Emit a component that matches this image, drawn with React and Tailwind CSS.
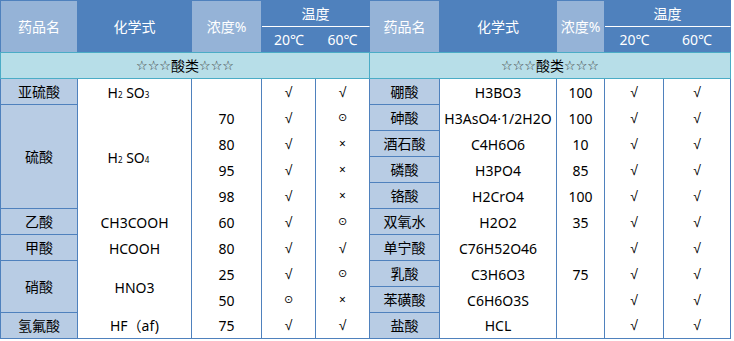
import React from "react";

// colours taken from the reference table
const line = "border-[#4f81bd]";

function Head({ children, light, className = "" }) {
  return (
    <div
      className={`flex items-center justify-center border-t border-r ${line} text-white ${
        light ? "bg-[#95b3d7]" : "bg-[#4f81bd]"
      } ${className}`}
    >
      {children}
    </div>
  );
}

function Name({ children, first, className = "" }) {
  return (
    <div
      className={`flex items-center justify-center bg-[#b8cce4] border-r border-b ${line} ${
        first ? "border-l" : ""
      } ${className}`}
    >
      {children}
    </div>
  );
}

function Cell({ children, last, className = "" }) {
  return (
    <div
      className={`flex items-center justify-center bg-white border-r ${line} ${
        last ? "border-b" : ""
      } ${className}`}
    >
      {children}
    </div>
  );
}

// marks used in the temperature columns
const Ok = () => <span className="font-['Liberation_Sans',sans-serif] text-[14px]">√</span>;
const Mid = () => <span className="font-['DejaVu_Sans',sans-serif] text-[11px]">⊙</span>;
const No = () => <span className="text-[12px]">×</span>;

function Sub({ children }) {
  return <span className="inline-block text-[8px] leading-none translate-y-[3px]">{children}</span>;
}

function Category({ first }) {
  return (
    <div
      className={`col-span-5 flex items-center justify-center bg-[#b7dee8] border-t border-b border-r border-[#4bacc6] ${
        first ? "border-l" : ""
      }`}
    >
      <span className="text-[13px] text-[#333] font-['DejaVu_Sans',sans-serif]">☆☆☆</span>
      酸类
      <span className="text-[13px] text-[#333] font-['DejaVu_Sans',sans-serif]">☆☆☆</span>
    </div>
  );
}

function LeftTable() {
  return (
    <div className="grid grid-cols-[78px_114px_70px_54px_54px] grid-rows-[27px_25px_27px_repeat(10,26px)]">
      <Head light className="row-span-2 border-l">药品名</Head>
      <Head className="row-span-2">化学式</Head>
      <Head light className="row-span-2">浓度%</Head>
      <Head className="col-span-2 border-b border-b-white">温度</Head>
      <div className="flex items-center justify-center bg-[#4f81bd] text-white">20℃</div>
      <div className="flex items-center justify-center bg-[#4f81bd] text-white border-r border-[#4f81bd]">60℃</div>

      <Category first />

      <Name first>亚硫酸</Name>
      <Cell className="pr-3">
        H<Sub>2</Sub>&nbsp;SO<Sub>3</Sub>
      </Cell>
      <Cell></Cell>
      <Cell><Ok /></Cell>
      <Cell><Ok /></Cell>

      <Name first className="row-span-4">硫酸</Name>
      <Cell className="row-span-4 pr-3">
        H<Sub>2</Sub>&nbsp;SO<Sub>4</Sub>
      </Cell>
      <Cell>70</Cell>
      <Cell><Ok /></Cell>
      <Cell><Mid /></Cell>
      <Cell>80</Cell>
      <Cell><Ok /></Cell>
      <Cell><No /></Cell>
      <Cell>95</Cell>
      <Cell><Ok /></Cell>
      <Cell><No /></Cell>
      <Cell>98</Cell>
      <Cell><Ok /></Cell>
      <Cell><No /></Cell>

      <Name first>乙酸</Name>
      <Cell>CH3COOH</Cell>
      <Cell>60</Cell>
      <Cell><Ok /></Cell>
      <Cell><Mid /></Cell>

      <Name first>甲酸</Name>
      <Cell>HCOOH</Cell>
      <Cell>80</Cell>
      <Cell><Ok /></Cell>
      <Cell><Ok /></Cell>

      <Name first className="row-span-2">硝酸</Name>
      <Cell className="row-span-2">HNO3</Cell>
      <Cell>25</Cell>
      <Cell><Ok /></Cell>
      <Cell><Mid /></Cell>
      <Cell>50</Cell>
      <Cell><Mid /></Cell>
      <Cell><No /></Cell>

      <Name first>氢氟酸</Name>
      <Cell last>HF（af)</Cell>
      <Cell last>75</Cell>
      <Cell last><Ok /></Cell>
      <Cell last><Ok /></Cell>
    </div>
  );
}

const rightRows = [
  ["硼酸", "H3BO3", "100"],
  ["砷酸", "H3AsO4·1/2H2O", "100"],
  ["酒石酸", "C4H6O6", "10"],
  ["磷酸", "H3PO4", "85"],
  ["铬酸", "H2CrO4", "100"],
  ["双氧水", "H2O2", "35"],
  ["单宁酸", "C76H52O46", ""],
  ["乳酸", "C3H6O3", "75"],
  ["苯磺酸", "C6H6O3S", ""],
  ["盐酸", "HCL", ""],
];

function RightTable() {
  return (
    <div className="grid grid-cols-[70px_117px_48px_59px_67px] grid-rows-[27px_25px_27px_repeat(10,26px)]">
      <Head light className="row-span-2">药品名</Head>
      <Head className="row-span-2">化学式</Head>
      <Head light className="row-span-2">浓度%</Head>
      <Head className="col-span-2 border-b border-b-white">温度</Head>
      <div className="flex items-center justify-center bg-[#4f81bd] text-white">20℃</div>
      <div className="flex items-center justify-center bg-[#4f81bd] text-white border-r border-[#4f81bd]">60℃</div>

      <Category />

      {rightRows.map(([name, formula, conc], i) => {
        const last = i === rightRows.length - 1;
        return (
          <React.Fragment key={name}>
            <Name>{name}</Name>
            <Cell last={last}>{formula}</Cell>
            <Cell last={last}>{conc}</Cell>
            <Cell last={last}><Ok /></Cell>
            <Cell last={last}><Ok /></Cell>
          </React.Fragment>
        );
      })}
    </div>
  );
}

export default function App() {
  return (
    <div className="w-[734px] h-[341px] bg-white flex items-start text-[14px] text-black font-['Noto_Sans','Noto_Sans_CJK_SC',sans-serif]">
      <LeftTable />
      <RightTable />
    </div>
  );
}
